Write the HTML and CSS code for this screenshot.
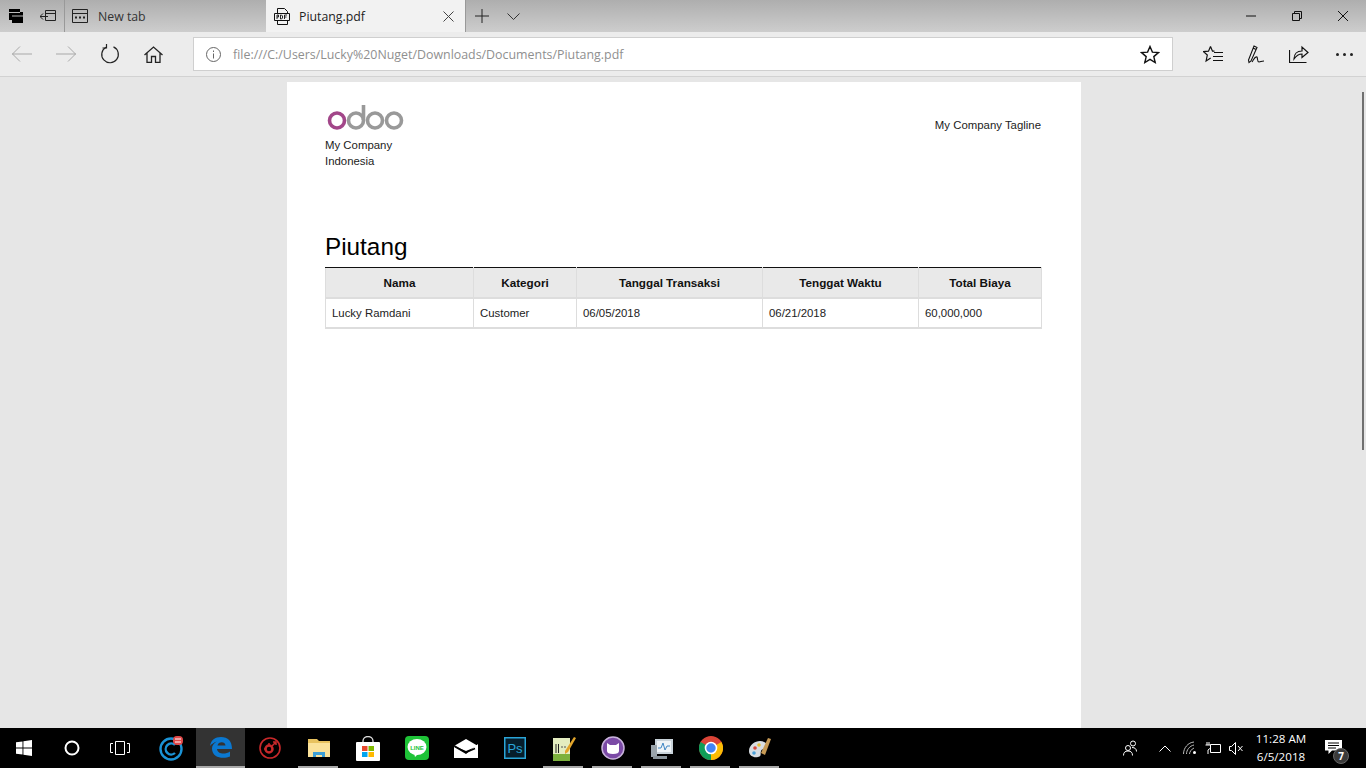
FILE: index.html
```html
<!DOCTYPE html>
<html lang="en">
<head>
  <meta charset="UTF-8">
  <title>Piutang.pdf</title>
  <link rel="stylesheet" href="styles.css">
</head>
<body>
  <div class="tabbar">
    <div class="tab-tool">
      <svg width="16" height="16" viewBox="0 0 16 16"><path d="M1 1h11v3h3v11H4v-3H1z" fill="#000"/><path d="M1 4.500h11M4 8h11" stroke="#bbb"/></svg>
    </div>
    <div class="tab-tool tab-tool-wide">
      <svg width="16" height="14" viewBox="0 0 16 14" fill="none" stroke="#222"><path d="M5.500 1.500h10v10h-10zM5.500 4.500h10"/><path d="M0 7.500h8M3 4.500l-3 3 3 3" fill="#bbb"/></svg>
    </div>
    <div class="tab tab-idle">
      <svg class="tab-icon" width="16" height="14" viewBox="0 0 16 14" fill="none" stroke="#222"><path d="M.5.500h15v13H.5zM.5 4.500h15"/><path d="M3 8.500h2M7 8.500h2M11 8.500h2" stroke-width="2"/></svg>
      <span>New tab</span>
    </div>
    <div class="tab tab-active">
      <svg class="tab-icon" width="16" height="17" viewBox="0 0 16 17" fill="none" stroke="#111"><path d="M3.500 5V.5h7l3 3V5M3.500 13v3.500h10V13M.5 5.500h15v7H.5z"/><path d="M3 11V7h1.500v2H3M6.500 7v4h1l1-1V8l-1-1zM10.500 11V7H13M10.500 9H12.500" stroke-width=".9"/></svg>
      <span class="tab-title">Piutang.pdf</span>
      <svg width="11" height="11" viewBox="0 0 11 11" stroke="#444"><path d="M.5.500l10 10M10.500.500l-10 10"/></svg>
    </div>
    <div class="tab-tool tab-add">
      <svg width="14" height="14" viewBox="0 0 14 14" stroke="#222"><path d="M7 0v14M0 7h14"/></svg>
    </div>
    <div class="tab-tool tab-more">
      <svg width="13" height="7" viewBox="0 0 13 7" fill="none" stroke="#333"><path d="M.5.500l6 6 6-6"/></svg>
    </div>
    <div class="window-controls">
      <svg width="10" height="2" viewBox="0 0 10 2" stroke="#111"><path d="M0 1h10"/></svg>
      <svg width="10" height="10" viewBox="0 0 10 10" fill="none" stroke="#111"><path d="M.5 2.500h7v7h-7zM2.500 2.500v-2h7v7h-2"/></svg>
      <svg width="10" height="10" viewBox="0 0 10 10" stroke="#111"><path d="M0 0l10 10M10 0L0 10"/></svg>
    </div>
  </div>

  <div class="navbar">
    <div class="nav-buttons">
      <svg width="20" height="16" viewBox="0 0 20 16" fill="none" stroke="#a8a8a8"><path d="M0 8h20M8 .5L.5 8 8 15.500"/></svg>
      <svg width="20" height="16" viewBox="0 0 20 16" fill="none" stroke="#a8a8a8"><path d="M0 8h20M12 .5L19.500 8 12 15.500"/></svg>
      <svg width="20" height="20" viewBox="0 0 20 20" fill="none" stroke="#222" stroke-width="1.200"><path d="M6 3.200a8.300 8.300 0 1 0 7.500-.3"/><path d="M6.500 0v4h-4"/></svg>
      <svg width="19" height="17" viewBox="0 0 19 17" fill="none" stroke="#222" stroke-width="1.300"><path d="M.5 9l9-8 9 8M3 7v9.500h4.500v-6h4v6H16V7"/></svg>
    </div>
    <div class="address">
      <svg width="15" height="15" viewBox="0 0 15 15" fill="none" stroke="#666"><circle cx="7.500" cy="7.500" r="7"/><path d="M7.500 6.500v5M7.500 3.500v1.500"/></svg>
      <span class="url">file:///C:/Users/Lucky%20Nuget/Downloads/Documents/Piutang.pdf</span>
      <svg width="20" height="19" viewBox="0 0 20 19" fill="none" stroke="#111" stroke-width="1.400"><path d="M10 1.500l2.400 5.600 6 .5-4.600 4 1.400 5.900-5.200-3.100-5.200 3.100 1.400-5.900-4.600-4 6-.5z"/></svg>
    </div>
    <div class="nav-tools">
      <svg width="20" height="19" viewBox="0 0 20 19" fill="none" stroke="#111" stroke-width="1.200"><path d="M7.500 1.500l2 4.700h2M7.500 1.500l-2 4.700-5 .4 3.800 3.400-1.200 5.900 4.600-2.900"/><path d="M11 7.500h9M10 11.500h10M10 15.500h10"/></svg>
      <svg width="18" height="19" viewBox="0 0 18 19" fill="none" stroke="#111" stroke-width="1.100"><path d="M7 1l3 1.500L4 16l-2 1.500-.5-2.500zM6 3l3 1.500"/><path d="M5 17c2-3 3-6 5-5 1 2 0 5 2 5s2-1 5-1"/></svg>
      <svg width="20" height="18" viewBox="0 0 20 18" fill="none" stroke="#111" stroke-width="1.200"><path d="M.5 5v12.500h17"/><path d="M5 14c0-5 3-8 8-8V2l6 5.500-6 5V9c-4 0-6 2-8 5z"/></svg>
      <div class="dots"><i></i><i></i><i></i></div>
    </div>
  </div>

  <div class="viewer">
    <div class="page">
      <div class="page-head">
        <div>
          <svg class="logo" width="80" height="26" viewBox="0 0 80 26" fill="none" stroke-width="3.600">
            <circle cx="12" cy="15.500" r="7.500" stroke="#a24689"/>
            <circle cx="31" cy="15.500" r="7.500" stroke="#999"/>
            <path d="M38.500 15V0" stroke="#999"/>
            <circle cx="50" cy="15.500" r="7.500" stroke="#999"/>
            <circle cx="69" cy="15.500" r="7.500" stroke="#999"/>
          </svg>
          <div class="company">My Company<br>Indonesia</div>
        </div>
        <div class="tagline">My Company Tagline</div>
      </div>
      <h1 class="doc-title">Piutang</h1>
      <table class="report">
        <colgroup>
          <col class="col-name"><col class="col-cat"><col class="col-date"><col class="col-due"><col class="col-total">
        </colgroup>
        <thead>
          <tr><th>Nama</th><th>Kategori</th><th>Tanggal Transaksi</th><th>Tenggat Waktu</th><th>Total Biaya</th></tr>
        </thead>
        <tbody>
          <tr><td>Lucky Ramdani</td><td>Customer</td><td>06/05/2018</td><td>06/21/2018</td><td>60,000,000</td></tr>
        </tbody>
      </table>
    </div>
    <div class="scroll-thumb"></div>
  </div>

  <div class="taskbar">
    <div class="task-sys">
      <svg width="16" height="16" viewBox="0 0 16 16" fill="#fff"><path d="M0 2.300l6.500-.9v6.200H0zM7.400 1.300L16 0v7.600H7.400zM0 8.400h6.500v6.200L0 13.700zM7.400 8.400H16V16l-8.600-1.200z"/></svg>
    </div>
    <div class="task-sys">
      <svg width="16" height="16" viewBox="0 0 16 16" fill="none" stroke="#fff" stroke-width="2"><circle cx="8" cy="8" r="6.500"/></svg>
    </div>
    <div class="task-sys task-view">
      <svg width="20" height="14" viewBox="0 0 20 14" fill="none" stroke="#fff"><path d="M5.500.5h9v13h-9zM3 2.500H.5v9H3M17 2.500h2.500v9H17"/></svg>
    </div>
    <div class="task-slot">
      <svg width="26" height="26" viewBox="0 0 26 26" fill="none"><circle cx="12" cy="14" r="10.500" stroke="#1b93d6" stroke-width="2.400"/><path d="M16 10a5.500 5.500 0 1 0 0 8" stroke="#1b93d6" stroke-width="2.400"/><rect x="14" y="1" width="10" height="9" rx="4" fill="#e04848"/><path d="M16 4h6M16 7h6" stroke="#fff"/></svg>
    </div>
    <div class="task-slot task-current">
      <svg width="22" height="22" viewBox="0 0 22 22" fill="#0b78d0"><path d="M0 10C1 4 5 1 11 1c7 0 11 4 11 12H7c.5 5 8 6 13 2.500v5c-6 2.500-18 2-18-8 0-3 2-5.500 5-7C4 6.500 1.500 8 0 10zM7.500 9.500h8C15.500 5 8 5 7.500 9.500z"/></svg>
    </div>
    <div class="task-slot">
      <svg width="22" height="22" viewBox="0 0 22 22" fill="none"><circle cx="11" cy="11" r="10" stroke="#c8282a" stroke-width="1.600"/><circle cx="10" cy="12" r="3.500" stroke="#c8282a" stroke-width="2.500"/><path d="M10 6v2M5 12h2M13 9l4-4M14 5h3v3" stroke="#c8282a" stroke-width="1.500"/></svg>
    </div>
    <div class="task-slot task-open">
      <svg width="22" height="20" viewBox="0 0 22 20"><path d="M0 1h9l2 2h11v16H0z" fill="#e8c25f"/><path d="M0 5h22v14H0z" fill="#fbe29a"/><path d="M5 19v-5h12v5h-3v-2H8v2z" fill="#3d9fd6"/></svg>
    </div>
    <div class="task-slot">
      <svg width="24" height="25" viewBox="0 0 24 25"><path d="M7 7V5a5 4.500 0 0 1 10 0v2" fill="none" stroke="#ddd" stroke-width="1.300"/><rect y="6" width="24" height="19" rx="1" fill="#fff"/><path d="M6 10h5.500v5H6z" fill="#e7492e"/><path d="M12.500 10H18v5h-5.500z" fill="#7fba00"/><path d="M6 16h5.500v5H6z" fill="#00a4ef"/><path d="M12.500 16H18v5h-5.500z" fill="#ffb900"/></svg>
    </div>
    <div class="task-slot">
      <svg width="24" height="24" viewBox="0 0 24 24"><rect width="24" height="24" rx="4" fill="#1ec337"/><ellipse cx="12" cy="11" rx="9.500" ry="8" fill="#fff"/><path d="M9 17h5l-4 4z" fill="#fff"/><text x="12" y="13.500" class="line-text">LINE</text></svg>
    </div>
    <div class="task-slot">
      <svg width="24" height="19" viewBox="0 0 24 19"><path d="M12 0l12 7-12 5L0 7z" fill="#fff"/><path d="M0 8l12 7 12-10v14H0z" fill="#fff"/><path d="M0 6.500l12 7 9-4" fill="none" stroke="#000" stroke-width="1.400"/></svg>
    </div>
    <div class="task-slot">
      <svg width="22" height="22" viewBox="0 0 22 22"><rect x=".75" y=".75" width="20.500" height="20.500" fill="#061d2b" stroke="#2aa5d8" stroke-width="1.500"/><text x="11" y="15.500" class="ps-text">Ps</text></svg>
    </div>
    <div class="task-slot task-open">
      <svg width="24" height="26" viewBox="0 0 24 26"><path d="M1 3h17v23H1z" fill="#e4edc0"/><path d="M1 19h17v7H1z" fill="#7cb13d"/><path d="M4 9v9M6.500 9v9" stroke="#222"/><path d="M9 12h5" stroke="#555" stroke-dasharray="2 1"/><path d="M13 16L22 2l2 1-8 14-3 2z" fill="#e2a52b"/></svg>
    </div>
    <div class="task-slot task-open">
      <svg width="24" height="24" viewBox="0 0 24 24"><circle cx="12" cy="12" r="11" fill="#7b4aa6" stroke="#c9b4dc" stroke-width="1.500"/><path d="M6 7l3 2h6l3-2v8c0 2-2 3-6 3s-6-1-6-3z" fill="#fff"/></svg>
    </div>
    <div class="task-slot task-open">
      <svg width="24" height="24" viewBox="0 0 24 24"><path d="M5 3h18v15H5z" fill="#c9d3da"/><path d="M7 5h14v11H7z" fill="#eef3f6"/><path d="M8 12h3l2-5 2 7 2-4h3" fill="none" stroke="#3f86c4"/><path d="M1 9h6v12H1z" fill="#9aa4ab"/><path d="M3 20h14v3H3z" fill="#8b959c"/></svg>
    </div>
    <div class="task-slot task-open">
      <svg width="24" height="24" viewBox="0 0 24 24"><circle cx="12" cy="12" r="12" fill="#db4437"/><path d="M12 12L22.400 6A12 12 0 0 1 12 24z" fill="#fbbc05"/><path d="M12 12L12 24A12 12 0 0 1 1.600 6z" fill="#0f9d58"/><circle cx="12" cy="12" r="5.500" fill="#4285f4" stroke="#fff" stroke-width="1.600"/></svg>
    </div>
    <div class="task-slot task-open">
      <svg width="24" height="26" viewBox="0 0 24 26"><path d="M1 16c0-6 6-10 11-10s8 3 7 6-5 1-6 4 1 5-3 6-9-1-9-6z" fill="#d8dde2"/><circle cx="7" cy="13" r="1.800" fill="#d8483a"/><circle cx="11" cy="10" r="1.800" fill="#e9c23a"/><circle cx="6" cy="18" r="1.800" fill="#4aa0d8"/><path d="M13 18L20 3l3 1-6 16z" fill="#c79a55"/></svg>
    </div>

    <div class="tray">
      <svg width="14" height="16" viewBox="0 0 14 16" fill="none" stroke="#fff"><circle cx="5" cy="8" r="2.500"/><path d="M.5 15.500c0-3 1.500-4.500 4.500-4.500s4.500 1.500 4.500 4.500"/><circle cx="10" cy="3.500" r="2.500"/><path d="M9 7.500c3 0 4.500 1.500 4.500 4"/></svg>
      <svg class="tray-up" width="12" height="7" viewBox="0 0 12 7" fill="none" stroke="#fff"><path d="M.5 6.500L6 1l5.500 5.500"/></svg>
      <svg width="14" height="14" viewBox="0 0 14 14" fill="none" stroke="#bbb"><path d="M.5 13C.5 7 5 1.500 11 1M3.500 13c0-4 3-8 7.500-9M6.500 13c0-2 2-5 4.500-6"/><circle cx="11.500" cy="11.500" r="1.500" fill="#fff" stroke="none"/></svg>
      <svg class="tray-power" width="16" height="14" viewBox="0 0 16 14" fill="none" stroke="#fff"><path d="M5.500 3.500h10v8h-10z"/><path d="M2 1v3M4 1v3M.5 4h5v3l-2.500 2v4"/></svg>
      <svg width="14" height="13" viewBox="0 0 14 13" fill="none" stroke="#fff"><path d="M.5 4.500h2l4-4v12l-4-4h-2zM9 4l4.500 5M13.500 4L9 9"/></svg>
      <div class="clock"><div>11:28 AM</div><div>6/5/2018</div></div>
      <div class="notify">
        <svg width="17" height="14" viewBox="0 0 17 14" fill="#fff"><path d="M0 0h17v10.500H7L3.500 14v-3.500H0z"/><path d="M3 3h11M3 5.500h11M3 8h8" stroke="#000"/></svg>
        <span class="badge">7</span>
      </div>
    </div>
  </div>
</body>
</html>
```

FILE: styles.css
```css
* {
  box-sizing: border-box;
}

body {
  margin: 0;
  height: 768px;
  overflow: hidden;
  display: flex;
  flex-direction: column;
  font-family: "Open Sans", "Liberation Sans", sans-serif;
}

svg {
  display: block;
  flex: none;
}

/* tab strip */
.tabbar {
  height: 32px;
  display: flex;
  align-items: stretch;
  background: linear-gradient(#aeaeae, #cdcdcd);
}

.tab-tool {
  width: 32px;
  display: flex;
  align-items: center;
  justify-content: center;
}

.tab-tool-wide {
  width: 33px;
  border-right: 1px solid #999;
}

.tab {
  display: flex;
  align-items: center;
  font-size: 12.3px;
  color: #333;
}

.tab-icon {
  margin-right: 10px;
}

.tab-idle {
  width: 201px;
  padding-left: 7px;
}

.tab-active {
  width: 200px;
  padding: 0 11px 0 8px;
  background: #f2f2f2;
  border-right: 1px solid #999;
  color: #222;
}

.tab-active .tab-icon {
  margin-right: 9px;
}

.tab-title {
  flex: 1;
}

.tab-more {
  width: 31px;
}

.window-controls {
  margin-left: auto;
  width: 138px;
  display: flex;
  align-items: center;
  justify-content: space-between;
  padding: 0 18px;
}

/* address row */
.navbar {
  height: 45px;
  display: flex;
  align-items: center;
  background: #ececec;
  border-bottom: 1px solid #d2d2d2;
}

.nav-buttons {
  width: 193px;
  display: flex;
  align-items: center;
  gap: 24px;
  padding-left: 12px;
}

.address {
  width: 980px;
  height: 34px;
  display: flex;
  align-items: center;
  padding: 0 12px;
  background: #fff;
  border: 1px solid #cfcfcf;
  font-size: 12.4px;
}

.url {
  flex: 1;
  margin-left: 12px;
  color: #8f8f8f;
}

.nav-tools {
  flex: 1;
  display: flex;
  align-items: center;
  gap: 24px;
  padding-left: 30px;
}

.dots {
  display: flex;
  gap: 4px;
  margin-left: 3px;
}

.dots i {
  width: 3px;
  height: 3px;
  background: #222;
  border-radius: 50%;
}

/* pdf area */
.viewer {
  flex: 1;
  min-height: 0;
  position: relative;
  display: flex;
  justify-content: center;
  padding: 5px 0 0 2px;
  background: #e6e6e6;
  overflow: hidden;
}

.page {
  width: 794px;
  padding: 23px 39px 0 38px;
  background: #fff;
  font-family: "Liberation Sans", Arial, sans-serif;
  color: #222;
  font-size: 11.4px;
}

.page-head {
  display: flex;
  justify-content: space-between;
}

.company {
  margin-top: 6px;
  line-height: 16px;
}

.tagline {
  margin-top: 14px;
  padding-right: 1px;
}

.doc-title {
  margin: 64px 0 0;
  font-size: 24.3px;
  font-weight: normal;
  line-height: 28px;
  color: #000;
}

.report {
  width: 716px;
  margin-top: 6px;
  table-layout: fixed;
  border-collapse: collapse;
  border-bottom: 2px solid #ddd;
}

.col-name { width: 148px; }
.col-cat { width: 103px; }
.col-date { width: 186px; }
.col-due { width: 156px; }
.col-total { width: 123px; }

.report th {
  height: 30px;
  padding: 0;
  background: #e9e9e9;
  border-top: 1px solid #111;
  border-bottom: 2px solid #ddd;
  border-left: 1px solid #ddd;
  border-right: 1px solid #ddd;
  font-size: 11.7px;
  color: #111;
}

.report td {
  height: 30px;
  padding: 0 6px;
  border-left: 1px solid #ddd;
  border-right: 1px solid #ddd;
}

.scroll-thumb {
  position: absolute;
  right: 2px;
  top: 15px;
  width: 2px;
  height: 358px;
  background: #707070;
}

/* taskbar */
.taskbar {
  height: 40px;
  display: flex;
  align-items: stretch;
  background: #000;
}

.task-sys {
  width: 48px;
  flex: none;
  display: flex;
  align-items: center;
  justify-content: center;
}

.task-view {
  margin-right: 3px;
}

.task-slot {
  position: relative;
  width: 49px;
  flex: none;
  display: flex;
  align-items: center;
  justify-content: center;
}

.task-current {
  background: #333;
  border-bottom: 2px solid #aaa;
}

.task-open::after {
  content: "";
  position: absolute;
  left: 4px;
  right: 5px;
  bottom: 0;
  height: 2px;
  background: #a9a9a9;
}

.line-text {
  font: bold 6px "Liberation Sans", sans-serif;
  fill: #1ec337;
  text-anchor: middle;
}

.ps-text {
  font: 13px "Liberation Sans", sans-serif;
  fill: #2aa5d8;
  text-anchor: middle;
}

.tray {
  margin-left: auto;
  display: flex;
  align-items: center;
  color: #fff;
}

.tray-up {
  margin: 0 12px 0 22px;
}

.tray-power {
  margin: 0 8px;
}

.clock {
  width: 72px;
  margin-left: 2px;
  text-align: center;
  font-size: 11.6px;
  line-height: 18px;
}

.notify {
  position: relative;
  width: 49px;
  height: 40px;
  padding: 12px 0 0 8px;
}

.badge {
  position: absolute;
  left: 16px;
  top: 20px;
  width: 16px;
  height: 16px;
  border-radius: 50%;
  background: #3a3a3a;
  border: 1px solid #666;
  font-size: 10px;
  font-weight: bold;
  line-height: 14px;
  text-align: center;
}
```
